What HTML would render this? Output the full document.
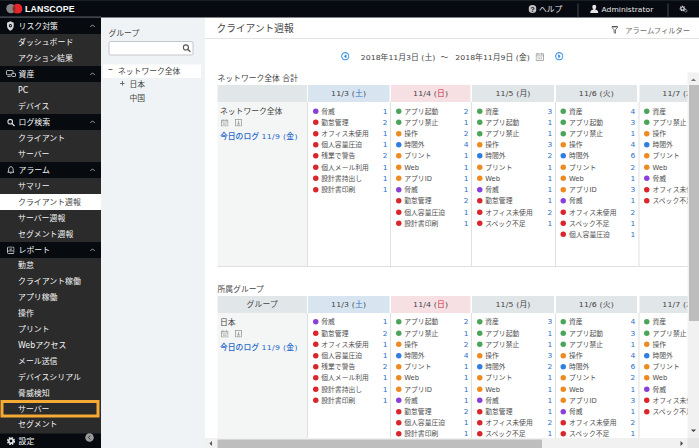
<!DOCTYPE html>
<html lang="ja"><head><meta charset="utf-8"><title>LANSCOPE</title>
<style>
html,body{margin:0;padding:0;background:#fff;}
body{width:699px;height:448px;overflow:hidden;position:relative;}
#root{position:absolute;left:0;top:0;width:1398px;height:896px;transform:scale(0.5);transform-origin:0 0;overflow:hidden;background:#fff;font-family:"DejaVu Sans","Liberation Sans","Noto Sans CJK JP",sans-serif;font-size:15.6px;color:#444;line-height:1;}
#root *{box-sizing:border-box;}
.abs{position:absolute;white-space:nowrap;}
.topbar{position:absolute;left:0;top:0;width:1398px;height:35px;background:#070a11;z-index:5;}
.side{position:absolute;left:0;top:33px;width:202px;height:863px;background:#2b2b2b;}
.srow{position:absolute;left:0;width:202px;height:32px;color:#f4f4f4;font-size:15.800px;font-weight:400;}
.srow span{position:absolute;left:37px;top:-0.500px;line-height:32px;white-space:nowrap;}
.srow.i span,.srow.s span{left:36px;}
.srow.h{background:#070b10;}
.srow.i{background:#2b2b2b;}
.srow.s{background:#fff;color:#444;font-weight:normal;}
.srow svg{position:absolute;}
.gp{position:absolute;left:202px;top:33px;width:208px;height:863px;background:#f0f3f5;}
.cell{position:absolute;}
.hd{position:absolute;text-align:center;color:#444;font-size:15.600px;letter-spacing:0.300px;}
.it{position:absolute;height:22.5px;line-height:22.5px;font-size:13.6px;color:#505050;white-space:nowrap;}
.it i{position:absolute;left:0.500px;top:6px;width:11px;height:11px;border-radius:50%;}
.it b{position:absolute;font-weight:normal;left:17.500px;top:0;}
.it u{position:absolute;right:0;top:0;text-decoration:none;color:#2a6fc9;font-size:15px;}
</style></head><body><div id="root">
<div class="topbar"><div class="abs" style="left:0;top:0;width:1398px;height:2px;background:#182022"></div><div class="abs" style="left:0;top:33px;width:202px;height:2px;background:#565a60"></div>
<svg class="abs" style="left:12px;top:6px" width="36" height="24" viewBox="0 0 36 24"><circle cx="9.800" cy="11.200" r="9.300" fill="#858585"/><circle cx="23" cy="11.400" r="9.800" fill="#e6252b"/><path d="M16.200 4.400a9.300 9.300 0 0 1 0 13.800a9.800 9.800 0 0 1 0-13.800z" fill="#8a2c22"/></svg>
<div class="abs" style="left:50px;top:6px;font-family:'Liberation Sans',sans-serif;font-weight:bold;font-size:17.6px;color:#fff;letter-spacing:0.2px;line-height:22px">LANSCOPE</div>
<svg class="abs" style="left:1057px;top:10px" width="16" height="16" viewBox="0 0 16 16"><circle cx="8" cy="8" r="8" fill="#c4c4c4"/><text x="8" y="13" text-anchor="middle" font-family="Liberation Sans,sans-serif" font-weight="bold" font-size="13.5" fill="#0c1016">?</text></svg>
<div class="abs" style="left:1078px;top:3px;line-height:32px;color:#e8e8e8;font-size:15.6px">ヘルプ</div>
<div class="abs" style="left:1155px;top:7px;width:1.500px;height:28px;background:#474b51"></div>
<svg class="abs" style="left:1180px;top:9px" width="17" height="17" viewBox="0 0 17 17"><ellipse cx="8.5" cy="5" rx="4" ry="4.6" fill="#e8e8e8"/><path d="M0.500 17c0-4.500 2.500-6 5.500-6.800l2.500 1.300l2.500-1.300c3 0.800 5.500 2.300 5.500 6.800z" fill="#e8e8e8"/><rect x="6.500" y="8" width="4" height="4" fill="#e8e8e8"/></svg>
<div class="abs" style="left:1203px;top:3px;line-height:32px;color:#e8e8e8;font-size:15.2px">Administrator</div>
<div class="abs" style="left:1335px;top:7px;width:1.500px;height:28px;background:#474b51"></div>
<svg class="abs" style="left:1358px;top:10px" width="18" height="16" viewBox="0 0 18 16"><circle cx="7" cy="7" r="4.2" fill="none" stroke="#cfcfcf" stroke-width="3" stroke-dasharray="2.2 1.1"/><circle cx="7" cy="7" r="3" fill="none" stroke="#cfcfcf" stroke-width="2"/><circle cx="13.5" cy="11.5" r="2.4" fill="none" stroke="#cfcfcf" stroke-width="2" stroke-dasharray="1.4 0.8"/></svg>
</div>
<div class="side">
<div class="abs" style="left:0;top:0;width:202px;height:3px;background:#0b0e15"></div><div class="abs" style="left:0;top:1px;width:202px;height:1.500px;background:#50545a"></div>
<div class="srow h" style="top:3px"><svg style="left:13px;top:6px" width="15.500" height="20" viewBox="0 0 15 17" preserveAspectRatio="none"><path d="M7.5 0.5l6.5 2.3v5.2c0 4-2.8 7-6.5 8.5c-3.7-1.500-6.500-4.500-6.500-8.500v-5.200z" fill="#d8d8d8"/><circle cx="7.500" cy="8" r="3" fill="#070b10"/><circle cx="7.5" cy="8" r="1.200" fill="#d8d8d8"/></svg><svg style="left:178.500px;top:10.500px" width="12" height="9" viewBox="0 0 13 9"><path d="M1.500 7.500l5-5l5 5" fill="none" stroke="#a0a4a8" stroke-width="2"/></svg><span>リスク対策</span></div>
<div class="srow i" style="top:35px"><span>ダッシュボード</span></div>
<div class="srow i" style="top:67px"><span>アクション結果</span></div>
<div class="srow h" style="top:99px"><svg style="left:11.500px;top:8px" width="20" height="14" viewBox="0 0 20 14"><rect x="1" y="1" width="13" height="8.500" rx="1.500" fill="none" stroke="#d8d8d8" stroke-width="1.700"/><path d="M3 12.800h6.500" stroke="#d8d8d8" stroke-width="1.700"/><rect x="11.500" y="6.800" width="7.500" height="6.200" rx="1.200" fill="#070b10" stroke="#d8d8d8" stroke-width="1.700"/></svg><svg style="left:178.500px;top:10.500px" width="12" height="9" viewBox="0 0 13 9"><path d="M1.500 7.500l5-5l5 5" fill="none" stroke="#a0a4a8" stroke-width="2"/></svg><span>資産</span></div>
<div class="srow i" style="top:131px"><span>PC</span></div>
<div class="srow i" style="top:163px"><span>デバイス</span></div>
<div class="srow h" style="top:195px"><svg style="left:13.500px;top:9px" width="16" height="16" viewBox="0 0 15 15"><circle cx="6" cy="6" r="4.300" fill="none" stroke="#d8d8d8" stroke-width="2"/><path d="M9.300 9.300l4.200 4.200" stroke="#d8d8d8" stroke-width="2.400" stroke-linecap="round"/></svg><svg style="left:178.500px;top:10.500px" width="12" height="9" viewBox="0 0 13 9"><path d="M1.500 7.500l5-5l5 5" fill="none" stroke="#a0a4a8" stroke-width="2"/></svg><span>ログ検索</span></div>
<div class="srow i" style="top:227px"><span>クライアント</span></div>
<div class="srow i" style="top:259px"><span>サーバー</span></div>
<div class="srow h" style="top:291px"><svg style="left:13.500px;top:7.500px" width="15.500" height="17.500" viewBox="0 0 15 17"><path d="M7.500 1.500c3 0 4.300 2.300 4.300 5v3.300l1.700 2.400h-12l1.700-2.400v-3.300c0-2.700 1.300-5 4.300-5z" fill="none" stroke="#d8d8d8" stroke-width="1.800" stroke-linejoin="round"/><path d="M5.800 14.300a1.800 1.800 0 0 0 3.400 0z" fill="#d8d8d8"/></svg><svg style="left:178.500px;top:10.500px" width="12" height="9" viewBox="0 0 13 9"><path d="M1.500 7.500l5-5l5 5" fill="none" stroke="#a0a4a8" stroke-width="2"/></svg><span>アラーム</span></div>
<div class="srow i" style="top:323px"><span>サマリー</span></div>
<div class="srow s" style="top:355px"><span>クライアント週報</span></div>
<div class="srow i" style="top:387px"><span>サーバー週報</span></div>
<div class="srow i" style="top:419px"><span>セグメント週報</span></div>
<div class="srow h" style="top:451px"><svg style="left:13.500px;top:8.500px" width="15" height="15" viewBox="0 0 15 16" preserveAspectRatio="none"><rect x="1" y="1" width="13" height="14" rx="2" fill="none" stroke="#d8d8d8" stroke-width="1.800"/><path d="M1.500 9.500h12M5 5.500h5" stroke="#d8d8d8" stroke-width="1.600"/><path d="M7.500 5.500v4" stroke="#b0b0b0" stroke-width="1.400"/></svg><svg style="left:178.500px;top:10.500px" width="12" height="9" viewBox="0 0 13 9"><path d="M1.500 7.500l5-5l5 5" fill="none" stroke="#a0a4a8" stroke-width="2"/></svg><span>レポート</span></div>
<div class="srow i" style="top:482.8px"><span>勤怠</span></div>
<div class="srow i" style="top:514.6px"><span>クライアント稼働</span></div>
<div class="srow i" style="top:546.4px"><span>アプリ稼働</span></div>
<div class="srow i" style="top:578.2px"><span>操作</span></div>
<div class="srow i" style="top:610px"><span>プリント</span></div>
<div class="srow i" style="top:641.8px"><span>Webアクセス</span></div>
<div class="srow i" style="top:673.6px"><span>メール送信</span></div>
<div class="srow i" style="top:705.4px"><span>デバイスシリアル</span></div>
<div class="srow i" style="top:737.2px"><span>脅威検知</span></div>
<div class="srow i" style="top:769px"><div class="abs" style="left:1px;top:-2px;width:198px;height:34.500px;border:6px solid #f4aa35;z-index:3"></div><span>サーバー</span></div>
<div class="srow i" style="top:800.8px"><span>セグメント</span></div>
<div class="srow h" style="top:833.5px"><svg style="left:12.500px;top:6.500px" width="18" height="18" viewBox="0 0 17 17"><circle cx="8.500" cy="8.500" r="5.800" fill="none" stroke="#e6e6e6" stroke-width="3.800" stroke-dasharray="2.800 1.755"/><circle cx="8.500" cy="8.500" r="4.100" fill="none" stroke="#e6e6e6" stroke-width="2.900"/></svg><svg style="left:170px;top:-1px" width="18" height="18" viewBox="0 0 18 18"><circle cx="9" cy="9" r="8.500" fill="#9a9a9a"/><path d="M10.500 5l-3.500 4l3.500 4" fill="none" stroke="#2b2b2b" stroke-width="1.800"/></svg><span>設定</span></div>
</div>
<div class="gp">
<div class="abs" style="left:15px;top:22px;line-height:22px;font-size:15.6px;color:#444">グループ</div>
<div class="abs" style="left:15px;top:49px;width:170px;height:29px;border:2px solid #c3c6c9;border-radius:4px;background:#fff"></div>
<svg class="abs" style="left:163px;top:55px" width="17" height="17" viewBox="0 0 15 15"><circle cx="6" cy="6" r="4.500" fill="none" stroke="#5a5a5a" stroke-width="2"/><path d="M9.300 9.300l4 4" stroke="#5a5a5a" stroke-width="2.400" stroke-linecap="round"/></svg>
<div class="abs" style="left:4px;top:96px;width:196px;height:27px;background:#fff"></div>
<div class="abs" style="left:15px;top:105px;width:8px;height:2px;background:#6a6a6a"></div>
<div class="abs" style="left:34px;top:96px;line-height:27px;color:#444">ネットワーク全体</div>
<div class="abs" style="left:38px;top:132.500px;width:9px;height:2px;background:#6a6a6a"></div><div class="abs" style="left:41.500px;top:129px;width:2px;height:9px;background:#6a6a6a"></div>
<div class="abs" style="left:57px;top:123px;line-height:27px;color:#444">日本</div>
<div class="abs" style="left:57px;top:150px;line-height:27px;color:#444">中国</div>
</div>
<div class="abs" style="left:410px;top:35px;width:988px;height:861px;background:#fff"></div>
<div class="abs" style="left:433px;top:43px;line-height:28px;font-size:19.400px;color:#444">クライアント週報</div>
<div class="abs" style="left:410px;top:76px;width:988px;height:2px;background:#e2e4e6"></div>
<svg class="abs" style="left:1223px;top:51.500px" width="13" height="16" viewBox="0 0 13 16"><path d="M0.800 1.200h11.400v1.600l-4.400 4.800v7l-2.600-1.400v-5.600l-4.400-4.800z" fill="#fff" stroke="#555" stroke-width="1.700" stroke-linejoin="round"/><path d="M1 1.600h11" stroke="#444" stroke-width="2.200"/></svg>
<div class="abs" style="left:1250.500px;top:48px;line-height:24px;font-size:14.600px;color:#6a6a6a">アラームフィルター</div>
<svg class="abs" style="left:681.5px;top:104px" width="17" height="17" viewBox="0 0 15 15"><circle cx="7.500" cy="7.500" r="6.300" fill="none" stroke="#3f9ae6" stroke-width="2"/><path d="M9 4.800l-3 2.700l3 2.700z" fill="#2f86d6" stroke="#2f86d6" stroke-width="1.200" stroke-linejoin="round"/></svg>
<div class="abs" style="left:721.500px;top:102px;line-height:24px;font-size:15.600px;color:#444">2018年11月3日 (土)</div>
<div class="abs" style="left:881px;top:102px;line-height:24px;font-size:15.600px;color:#444">～</div>
<div class="abs" style="left:910.500px;top:102px;line-height:24px;font-size:15.600px;color:#444">2018年11月9日 (金)</div>
<svg class="abs" style="left:1071px;top:104.500px" width="17" height="17" viewBox="0 0 15 15"><rect x="1" y="2.500" width="13" height="11.500" fill="none" stroke="#999" stroke-width="1.400"/><path d="M1 6h13M4 0.500v3.500M11 0.500v3.500M4.500 8.500v3.500M7.500 8.500v3.500M10.500 8.500v3.500" stroke="#999" stroke-width="1.300"/></svg>
<svg class="abs" style="left:1109.5px;top:104px" width="17" height="17" viewBox="0 0 15 15"><circle cx="7.500" cy="7.500" r="6.300" fill="none" stroke="#3f9ae6" stroke-width="2"/><path d="M6.300 4.800l3 2.700l-3 2.700z" fill="#2f86d6" stroke="#2f86d6" stroke-width="1.200" stroke-linejoin="round"/></svg>
<div class="abs" style="left:435px;top:144px;line-height:24px;color:#444">ネットワーク全体 合計</div>
<div class="hd" style="left:435px;top:170px;width:179px;height:34px;line-height:34px;background:#e1e6e9">

</div>
<div class="cell" style="left:435px;top:204px;width:180px;height:329.5px;background:#f4f5f5;border-bottom:2px solid #e0e0e0"></div>
<div class="hd" style="left:616px;top:170px;width:162.5px;height:34px;line-height:34px;background:#d8e5f1">
11/3 (<span style="color:#2a6fc9">土</span>)
</div>
<div class="cell" style="left:614px;top:204px;width:166.5px;height:329.5px;background:#fff;border-left:2px solid #e0e0e0;border-bottom:2px solid #e0e0e0"></div>
<div class="hd" style="left:782px;top:170px;width:158.5px;height:34px;line-height:34px;background:#f7e0e4">
11/4 (<span style="color:#d0293d">日</span>)
</div>
<div class="cell" style="left:780px;top:204px;width:162.5px;height:329.5px;background:#fff;border-left:2px solid #e0e0e0;border-bottom:2px solid #e0e0e0"></div>
<div class="hd" style="left:944px;top:170px;width:164px;height:34px;line-height:34px;background:#e1e6e9">
11/5 (月)
</div>
<div class="cell" style="left:942px;top:204px;width:168px;height:329.5px;background:#fff;border-left:2px solid #e0e0e0;border-bottom:2px solid #e0e0e0"></div>
<div class="hd" style="left:1111.5px;top:170px;width:162.5px;height:34px;line-height:34px;background:#e1e6e9">
11/6 (火)
</div>
<div class="cell" style="left:1109.5px;top:204px;width:166.5px;height:329.5px;background:#fff;border-left:2px solid #e0e0e0;border-bottom:2px solid #e0e0e0"></div>
<div class="hd" style="left:1278.5px;top:170px;width:162.5px;height:34px;line-height:34px;background:#e1e6e9">
11/7 (水)
</div>
<div class="cell" style="left:1276.5px;top:204px;width:166.5px;height:329.5px;background:#fff;border-left:2px solid #e0e0e0;border-bottom:2px solid #e0e0e0"></div>
<div class="abs" style="left:440px;top:210px;line-height:24px;color:#444">ネットワーク全体</div>
<svg class="abs" style="left:441.5px;top:238px" width="15" height="15" viewBox="0 0 15 15"><rect x="1" y="2.500" width="13" height="11.500" fill="none" stroke="#9c9c9c" stroke-width="1.600"/><path d="M1 6h13M4 0.500v3.500M11 0.500v3.500M5 8.500v3.500M7.500 8.500v3.500M10 8.500v3.500" stroke="#9c9c9c" stroke-width="1.300"/></svg>
<svg class="abs" style="left:470px;top:238px" width="14" height="15" viewBox="0 0 14 15"><rect x="1" y="1" width="12" height="13" fill="none" stroke="#9c9c9c" stroke-width="1.600"/><path d="M7 3.500v6M4.500 7.500l2.500 2.500l2.500-2.500M4 12h6" fill="none" stroke="#8a8a8a" stroke-width="1.400"/></svg>
<div class="abs" style="left:440px;top:260px;line-height:24px;color:#2468cc;font-weight:500">今日のログ <span style="letter-spacing:0.600px">11/9 (金)</span></div>
<div class="it" style="left:625px;top:210.75px;width:150px"><i style="background:#8a3fd8"></i><b>脅威</b><u>1</u></div>
<div class="it" style="left:625px;top:233.17px;width:150px"><i style="background:#d9262c"></i><b>勤怠管理</b><u>2</u></div>
<div class="it" style="left:625px;top:255.59px;width:150px"><i style="background:#d9262c"></i><b>オフィス未使用</b><u>1</u></div>
<div class="it" style="left:625px;top:278.01px;width:150px"><i style="background:#d9262c"></i><b>個人容量圧迫</b><u>1</u></div>
<div class="it" style="left:625px;top:300.43px;width:150px"><i style="background:#d9262c"></i><b>残業で警告</b><u>2</u></div>
<div class="it" style="left:625px;top:322.85px;width:150px"><i style="background:#d9262c"></i><b>個人メール利用</b><u>1</u></div>
<div class="it" style="left:625px;top:345.27px;width:150px"><i style="background:#d9262c"></i><b>設計書持出し</b><u>1</u></div>
<div class="it" style="left:625px;top:367.69px;width:150px"><i style="background:#d9262c"></i><b>設計書印刷</b><u>1</u></div>
<div class="it" style="left:791px;top:210.75px;width:146px"><i style="background:#4aa45a"></i><b>アプリ起動</b><u>2</u></div>
<div class="it" style="left:791px;top:233.17px;width:146px"><i style="background:#4aa45a"></i><b>アプリ禁止</b><u>1</u></div>
<div class="it" style="left:791px;top:255.59px;width:146px"><i style="background:#ee8a22"></i><b>操作</b><u>2</u></div>
<div class="it" style="left:791px;top:278.01px;width:146px"><i style="background:#2f7fe0"></i><b>時間外</b><u>4</u></div>
<div class="it" style="left:791px;top:300.43px;width:146px"><i style="background:#ee8a22"></i><b>プリント</b><u>1</u></div>
<div class="it" style="left:791px;top:322.85px;width:146px"><i style="background:#ee8a22"></i><b>Web</b><u>1</u></div>
<div class="it" style="left:791px;top:345.27px;width:146px"><i style="background:#ee8a22"></i><b>アプリID</b><u>1</u></div>
<div class="it" style="left:791px;top:367.69px;width:146px"><i style="background:#8a3fd8"></i><b>脅威</b><u>1</u></div>
<div class="it" style="left:791px;top:390.11px;width:146px"><i style="background:#d9262c"></i><b>勤怠管理</b><u>2</u></div>
<div class="it" style="left:791px;top:412.53px;width:146px"><i style="background:#d9262c"></i><b>個人容量圧迫</b><u>1</u></div>
<div class="it" style="left:791px;top:434.95px;width:146px"><i style="background:#d9262c"></i><b>設計書印刷</b><u>1</u></div>
<div class="it" style="left:953px;top:210.75px;width:151.5px"><i style="background:#4aa45a"></i><b>資産</b><u>3</u></div>
<div class="it" style="left:953px;top:233.17px;width:151.5px"><i style="background:#4aa45a"></i><b>アプリ起動</b><u>1</u></div>
<div class="it" style="left:953px;top:255.59px;width:151.5px"><i style="background:#4aa45a"></i><b>アプリ禁止</b><u>1</u></div>
<div class="it" style="left:953px;top:278.01px;width:151.5px"><i style="background:#ee8a22"></i><b>操作</b><u>3</u></div>
<div class="it" style="left:953px;top:300.43px;width:151.5px"><i style="background:#2f7fe0"></i><b>時間外</b><u>2</u></div>
<div class="it" style="left:953px;top:322.85px;width:151.5px"><i style="background:#ee8a22"></i><b>プリント</b><u>1</u></div>
<div class="it" style="left:953px;top:345.27px;width:151.5px"><i style="background:#ee8a22"></i><b>Web</b><u>1</u></div>
<div class="it" style="left:953px;top:367.69px;width:151.5px"><i style="background:#8a3fd8"></i><b>脅威</b><u>1</u></div>
<div class="it" style="left:953px;top:390.11px;width:151.5px"><i style="background:#d9262c"></i><b>勤怠管理</b><u>1</u></div>
<div class="it" style="left:953px;top:412.53px;width:151.5px"><i style="background:#d9262c"></i><b>オフィス未使用</b><u>2</u></div>
<div class="it" style="left:953px;top:434.95px;width:151.5px"><i style="background:#d9262c"></i><b>スペック不足</b><u>1</u></div>
<div class="it" style="left:1120.5px;top:210.75px;width:150px"><i style="background:#4aa45a"></i><b>資産</b><u>4</u></div>
<div class="it" style="left:1120.5px;top:233.17px;width:150px"><i style="background:#4aa45a"></i><b>アプリ起動</b><u>3</u></div>
<div class="it" style="left:1120.5px;top:255.59px;width:150px"><i style="background:#4aa45a"></i><b>アプリ禁止</b><u>1</u></div>
<div class="it" style="left:1120.5px;top:278.01px;width:150px"><i style="background:#ee8a22"></i><b>操作</b><u>4</u></div>
<div class="it" style="left:1120.5px;top:300.43px;width:150px"><i style="background:#2f7fe0"></i><b>時間外</b><u>6</u></div>
<div class="it" style="left:1120.5px;top:322.85px;width:150px"><i style="background:#ee8a22"></i><b>プリント</b><u>2</u></div>
<div class="it" style="left:1120.5px;top:345.27px;width:150px"><i style="background:#ee8a22"></i><b>Web</b><u>1</u></div>
<div class="it" style="left:1120.5px;top:367.69px;width:150px"><i style="background:#ee8a22"></i><b>アプリID</b><u>3</u></div>
<div class="it" style="left:1120.5px;top:390.11px;width:150px"><i style="background:#8a3fd8"></i><b>脅威</b><u>1</u></div>
<div class="it" style="left:1120.5px;top:412.53px;width:150px"><i style="background:#d9262c"></i><b>オフィス未使用</b><u>2</u></div>
<div class="it" style="left:1120.5px;top:434.95px;width:150px"><i style="background:#d9262c"></i><b>スペック不足</b><u>1</u></div>
<div class="it" style="left:1120.5px;top:457.37px;width:150px"><i style="background:#d9262c"></i><b>個人容量圧迫</b><u>1</u></div>
<div class="it" style="left:1287.5px;top:210.75px;width:150px"><i style="background:#4aa45a"></i><b>資産</b><u>2</u></div>
<div class="it" style="left:1287.5px;top:233.17px;width:150px"><i style="background:#4aa45a"></i><b>アプリ禁止</b><u>1</u></div>
<div class="it" style="left:1287.5px;top:255.59px;width:150px"><i style="background:#ee8a22"></i><b>操作</b><u>3</u></div>
<div class="it" style="left:1287.5px;top:278.01px;width:150px"><i style="background:#2f7fe0"></i><b>時間外</b><u>2</u></div>
<div class="it" style="left:1287.5px;top:300.43px;width:150px"><i style="background:#ee8a22"></i><b>プリント</b><u>1</u></div>
<div class="it" style="left:1287.5px;top:322.85px;width:150px"><i style="background:#ee8a22"></i><b>Web</b><u>1</u></div>
<div class="it" style="left:1287.5px;top:345.27px;width:150px"><i style="background:#8a3fd8"></i><b>脅威</b><u>1</u></div>
<div class="it" style="left:1287.5px;top:367.69px;width:150px"><i style="background:#d9262c"></i><b>オフィス未使用</b><u>2</u></div>
<div class="it" style="left:1287.5px;top:390.11px;width:150px"><i style="background:#d9262c"></i><b>スペック不足</b><u>1</u></div>
<div class="abs" style="left:435px;top:565.5px;line-height:24px;color:#444">所属グループ</div>
<div class="hd" style="left:435px;top:591.5px;width:179px;height:34px;line-height:34px;background:#e1e6e9">
グループ
</div>
<div class="cell" style="left:435px;top:625.5px;width:180px;height:274.5px;background:#f4f5f5;border-bottom:2px solid #e0e0e0"></div>
<div class="hd" style="left:616px;top:591.5px;width:162.5px;height:34px;line-height:34px;background:#d8e5f1">
11/3 (<span style="color:#2a6fc9">土</span>)
</div>
<div class="cell" style="left:614px;top:625.5px;width:166.5px;height:274.5px;background:#fff;border-left:2px solid #e0e0e0;border-bottom:2px solid #e0e0e0"></div>
<div class="hd" style="left:782px;top:591.5px;width:158.5px;height:34px;line-height:34px;background:#f7e0e4">
11/4 (<span style="color:#d0293d">日</span>)
</div>
<div class="cell" style="left:780px;top:625.5px;width:162.5px;height:274.5px;background:#fff;border-left:2px solid #e0e0e0;border-bottom:2px solid #e0e0e0"></div>
<div class="hd" style="left:944px;top:591.5px;width:164px;height:34px;line-height:34px;background:#e1e6e9">
11/5 (月)
</div>
<div class="cell" style="left:942px;top:625.5px;width:168px;height:274.5px;background:#fff;border-left:2px solid #e0e0e0;border-bottom:2px solid #e0e0e0"></div>
<div class="hd" style="left:1111.5px;top:591.5px;width:162.5px;height:34px;line-height:34px;background:#e1e6e9">
11/6 (火)
</div>
<div class="cell" style="left:1109.5px;top:625.5px;width:166.5px;height:274.5px;background:#fff;border-left:2px solid #e0e0e0;border-bottom:2px solid #e0e0e0"></div>
<div class="hd" style="left:1278.5px;top:591.5px;width:162.5px;height:34px;line-height:34px;background:#e1e6e9">
11/7 (水)
</div>
<div class="cell" style="left:1276.5px;top:625.5px;width:166.5px;height:274.5px;background:#fff;border-left:2px solid #e0e0e0;border-bottom:2px solid #e0e0e0"></div>
<div class="abs" style="left:440px;top:631.5px;line-height:24px;color:#444">日本</div>
<svg class="abs" style="left:441.5px;top:659.5px" width="15" height="15" viewBox="0 0 15 15"><rect x="1" y="2.500" width="13" height="11.500" fill="none" stroke="#9c9c9c" stroke-width="1.600"/><path d="M1 6h13M4 0.500v3.500M11 0.500v3.500M5 8.500v3.500M7.500 8.500v3.500M10 8.500v3.500" stroke="#9c9c9c" stroke-width="1.300"/></svg>
<svg class="abs" style="left:470px;top:659.5px" width="14" height="15" viewBox="0 0 14 15"><rect x="1" y="1" width="12" height="13" fill="none" stroke="#9c9c9c" stroke-width="1.600"/><path d="M7 3.500v6M4.500 7.500l2.500 2.500l2.500-2.500M4 12h6" fill="none" stroke="#8a8a8a" stroke-width="1.400"/></svg>
<div class="abs" style="left:440px;top:681.5px;line-height:24px;color:#2468cc;font-weight:500">今日のログ <span style="letter-spacing:0.600px">11/9 (金)</span></div>
<div class="it" style="left:625px;top:632.25px;width:150px"><i style="background:#8a3fd8"></i><b>脅威</b><u>1</u></div>
<div class="it" style="left:625px;top:654.67px;width:150px"><i style="background:#d9262c"></i><b>勤怠管理</b><u>2</u></div>
<div class="it" style="left:625px;top:677.09px;width:150px"><i style="background:#d9262c"></i><b>オフィス未使用</b><u>1</u></div>
<div class="it" style="left:625px;top:699.51px;width:150px"><i style="background:#d9262c"></i><b>個人容量圧迫</b><u>1</u></div>
<div class="it" style="left:625px;top:721.93px;width:150px"><i style="background:#d9262c"></i><b>残業で警告</b><u>2</u></div>
<div class="it" style="left:625px;top:744.35px;width:150px"><i style="background:#d9262c"></i><b>個人メール利用</b><u>1</u></div>
<div class="it" style="left:625px;top:766.77px;width:150px"><i style="background:#d9262c"></i><b>設計書持出し</b><u>1</u></div>
<div class="it" style="left:625px;top:789.19px;width:150px"><i style="background:#d9262c"></i><b>設計書印刷</b><u>1</u></div>
<div class="it" style="left:791px;top:632.25px;width:146px"><i style="background:#4aa45a"></i><b>アプリ起動</b><u>2</u></div>
<div class="it" style="left:791px;top:654.67px;width:146px"><i style="background:#4aa45a"></i><b>アプリ禁止</b><u>1</u></div>
<div class="it" style="left:791px;top:677.09px;width:146px"><i style="background:#ee8a22"></i><b>操作</b><u>2</u></div>
<div class="it" style="left:791px;top:699.51px;width:146px"><i style="background:#2f7fe0"></i><b>時間外</b><u>4</u></div>
<div class="it" style="left:791px;top:721.93px;width:146px"><i style="background:#ee8a22"></i><b>プリント</b><u>1</u></div>
<div class="it" style="left:791px;top:744.35px;width:146px"><i style="background:#ee8a22"></i><b>Web</b><u>1</u></div>
<div class="it" style="left:791px;top:766.77px;width:146px"><i style="background:#ee8a22"></i><b>アプリID</b><u>1</u></div>
<div class="it" style="left:791px;top:789.19px;width:146px"><i style="background:#8a3fd8"></i><b>脅威</b><u>1</u></div>
<div class="it" style="left:791px;top:811.61px;width:146px"><i style="background:#d9262c"></i><b>勤怠管理</b><u>2</u></div>
<div class="it" style="left:791px;top:834.03px;width:146px"><i style="background:#d9262c"></i><b>個人容量圧迫</b><u>1</u></div>
<div class="it" style="left:791px;top:856.45px;width:146px"><i style="background:#d9262c"></i><b>設計書印刷</b><u>1</u></div>
<div class="it" style="left:953px;top:632.25px;width:151.5px"><i style="background:#4aa45a"></i><b>資産</b><u>3</u></div>
<div class="it" style="left:953px;top:654.67px;width:151.5px"><i style="background:#4aa45a"></i><b>アプリ起動</b><u>1</u></div>
<div class="it" style="left:953px;top:677.09px;width:151.5px"><i style="background:#4aa45a"></i><b>アプリ禁止</b><u>1</u></div>
<div class="it" style="left:953px;top:699.51px;width:151.5px"><i style="background:#ee8a22"></i><b>操作</b><u>3</u></div>
<div class="it" style="left:953px;top:721.93px;width:151.5px"><i style="background:#2f7fe0"></i><b>時間外</b><u>2</u></div>
<div class="it" style="left:953px;top:744.35px;width:151.5px"><i style="background:#ee8a22"></i><b>プリント</b><u>1</u></div>
<div class="it" style="left:953px;top:766.77px;width:151.5px"><i style="background:#ee8a22"></i><b>Web</b><u>1</u></div>
<div class="it" style="left:953px;top:789.19px;width:151.5px"><i style="background:#8a3fd8"></i><b>脅威</b><u>1</u></div>
<div class="it" style="left:953px;top:811.61px;width:151.5px"><i style="background:#d9262c"></i><b>勤怠管理</b><u>1</u></div>
<div class="it" style="left:953px;top:834.03px;width:151.5px"><i style="background:#d9262c"></i><b>オフィス未使用</b><u>2</u></div>
<div class="it" style="left:953px;top:856.45px;width:151.5px"><i style="background:#d9262c"></i><b>スペック不足</b><u>1</u></div>
<div class="it" style="left:1120.5px;top:632.25px;width:150px"><i style="background:#4aa45a"></i><b>資産</b><u>4</u></div>
<div class="it" style="left:1120.5px;top:654.67px;width:150px"><i style="background:#4aa45a"></i><b>アプリ起動</b><u>3</u></div>
<div class="it" style="left:1120.5px;top:677.09px;width:150px"><i style="background:#4aa45a"></i><b>アプリ禁止</b><u>1</u></div>
<div class="it" style="left:1120.5px;top:699.51px;width:150px"><i style="background:#ee8a22"></i><b>操作</b><u>4</u></div>
<div class="it" style="left:1120.5px;top:721.93px;width:150px"><i style="background:#2f7fe0"></i><b>時間外</b><u>6</u></div>
<div class="it" style="left:1120.5px;top:744.35px;width:150px"><i style="background:#ee8a22"></i><b>プリント</b><u>2</u></div>
<div class="it" style="left:1120.5px;top:766.77px;width:150px"><i style="background:#ee8a22"></i><b>Web</b><u>1</u></div>
<div class="it" style="left:1120.5px;top:789.19px;width:150px"><i style="background:#ee8a22"></i><b>アプリID</b><u>3</u></div>
<div class="it" style="left:1120.5px;top:811.61px;width:150px"><i style="background:#8a3fd8"></i><b>脅威</b><u>1</u></div>
<div class="it" style="left:1120.5px;top:834.03px;width:150px"><i style="background:#d9262c"></i><b>オフィス未使用</b><u>2</u></div>
<div class="it" style="left:1120.5px;top:856.45px;width:150px"><i style="background:#d9262c"></i><b>スペック不足</b><u>1</u></div>
<div class="it" style="left:1120.5px;top:878.87px;width:150px"><i style="background:#d9262c"></i><b>個人容量圧迫</b><u>1</u></div>
<div class="it" style="left:1287.5px;top:632.25px;width:150px"><i style="background:#4aa45a"></i><b>資産</b><u>2</u></div>
<div class="it" style="left:1287.5px;top:654.67px;width:150px"><i style="background:#4aa45a"></i><b>アプリ禁止</b><u>1</u></div>
<div class="it" style="left:1287.5px;top:677.09px;width:150px"><i style="background:#ee8a22"></i><b>操作</b><u>3</u></div>
<div class="it" style="left:1287.5px;top:699.51px;width:150px"><i style="background:#2f7fe0"></i><b>時間外</b><u>2</u></div>
<div class="it" style="left:1287.5px;top:721.93px;width:150px"><i style="background:#ee8a22"></i><b>プリント</b><u>1</u></div>
<div class="it" style="left:1287.5px;top:744.35px;width:150px"><i style="background:#ee8a22"></i><b>Web</b><u>1</u></div>
<div class="it" style="left:1287.5px;top:766.77px;width:150px"><i style="background:#8a3fd8"></i><b>脅威</b><u>1</u></div>
<div class="it" style="left:1287.5px;top:789.19px;width:150px"><i style="background:#d9262c"></i><b>オフィス未使用</b><u>2</u></div>
<div class="it" style="left:1287.5px;top:811.61px;width:150px"><i style="background:#d9262c"></i><b>スペック不足</b><u>1</u></div>
<div class="abs" style="left:1375px;top:145px;width:23px;height:731px;background:#f1f1f1"></div>
<svg class="abs" style="left:1381px;top:155px" width="12" height="8" viewBox="0 0 14 9"><path d="M1 8l6-6l6 6z" fill="#777"/></svg>
<div class="abs" style="left:1378px;top:170px;width:20px;height:472px;background:#bdbdbd"></div>
<svg class="abs" style="left:1381px;top:858px" width="12" height="8" viewBox="0 0 14 9"><path d="M1 1l6 6l6-6z" fill="#444"/></svg>
<div class="abs" style="left:410px;top:876px;width:988px;height:20px;background:#f1f1f1"></div>
<svg class="abs" style="left:417px;top:881px" width="8" height="12" viewBox="0 0 9 14"><path d="M8 1l-6 6l6 6z" fill="#555"/></svg>
<div class="abs" style="left:435px;top:879px;width:649px;height:17px;background:#bebebe"></div>
<svg class="abs" style="left:1360px;top:881px" width="8" height="12" viewBox="0 0 9 14"><path d="M1 1l6 6l-6 6z" fill="#444"/></svg>
<div class="abs" style="left:1375px;top:876px;width:23px;height:20px;background:#e6e6e6"></div>
</div></body></html>
